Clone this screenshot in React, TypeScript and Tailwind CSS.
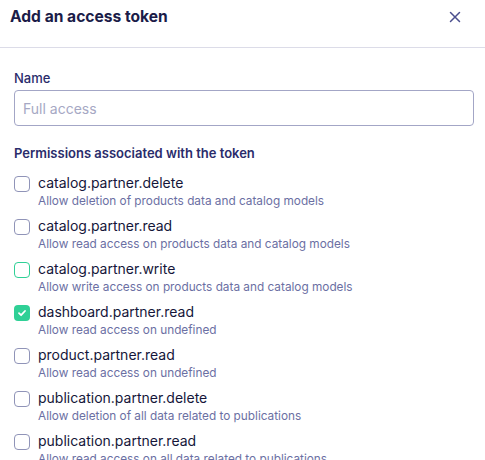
import React from 'react';

interface Permission {
    name: string;
    description: string;
    checked?: boolean;
    focused?: boolean;
}

const permissions: Permission[] = [
    { name: "catalog.partner.delete", description: "Allow deletion of products data and catalog models" },
    { name: "catalog.partner.read", description: "Allow read access on products data and catalog models" },
    { name: "catalog.partner.write", description: "Allow write access on products data and catalog models", focused: true },
    { name: "dashboard.partner.read", description: "Allow read access on undefined", checked: true },
    { name: "product.partner.read", description: "Allow read access on undefined" },
    { name: "publication.partner.delete", description: "Allow deletion of all data related to publications" },
    { name: "publication.partner.read", description: "Allow read access on all data related to publications" },
];

function Checkbox({ checked, focused }: { checked?: boolean; focused?: boolean }) {
    if (checked) {
        return (
            <span className="mt-[3px] flex h-4 w-4 shrink-0 items-center justify-center rounded-[4px] bg-[#2fd096]">
                <svg width="10" height="10" viewBox="0 0 10 10" fill="none">
                    <path d="M2 5.2L4.1 7.2L8 3" stroke="white" strokeWidth="1.8" strokeLinecap="round" strokeLinejoin="round" />
                </svg>
            </span>
        );
    }
    return (
        <span
            className={
                focused
                    ? "mt-[3px] h-4 w-4 shrink-0 rounded-[4px] border border-[#2fd096] bg-white"
                    : "mt-[3px] h-4 w-4 shrink-0 rounded-[4px] border border-[#9094b8] bg-white"
            }
        />
    );
}

export default function App() {
    return (
        <div className="h-[460px] w-[485px] overflow-hidden bg-white font-['Inter',sans-serif]">
            <div className="flex items-start justify-between border-b border-[#dcdce8] px-[10px] pt-[5px] pb-[18px]">
                <h1 className="text-[15.6px] leading-6 font-bold text-[#1b1c48]">Add an access token</h1>
                <button className="mt-[6px] mr-[14px] text-[#4b4f8e]">
                    <svg width="12" height="12" viewBox="0 0 12 12" fill="none">
                        <path d="M1.5 1.5L10.5 10.5M10.5 1.5L1.5 10.5" stroke="currentColor" strokeWidth="1.5" strokeLinecap="round" />
                    </svg>
                </button>
            </div>

            <div className="px-[14px] pt-[20px]">
                <label className="block text-[13px] leading-5 font-medium text-[#2a2c6b]">Name</label>
                <input
                    className="mt-[2px] h-[36px] w-[460px] rounded-[4px] border border-[#a3a6c6] px-[8px] text-[14px] text-[#1b1c48] outline-none placeholder:text-[#a6a8c4]"
                    placeholder="Full access"
                />

                <h2 className="mt-[17px] text-[13px] leading-5 font-semibold text-[#2a2c6b]">
                    Permissions associated with the token
                </h2>

                <div className="mt-[10px] flex flex-col gap-[7px]">
                    {permissions.map((p) => (
                        <div key={p.name} className="flex items-start gap-2">
                            <Checkbox checked={p.checked} focused={p.focused} />
                            <div>
                                <div className="text-[14px] leading-5 text-[#15163a]">{p.name}</div>
                                <div className="text-[11.8px] leading-4 text-[#6b6fa3]">{p.description}</div>
                            </div>
                        </div>
                    ))}
                </div>
            </div>
        </div>
    );
}
